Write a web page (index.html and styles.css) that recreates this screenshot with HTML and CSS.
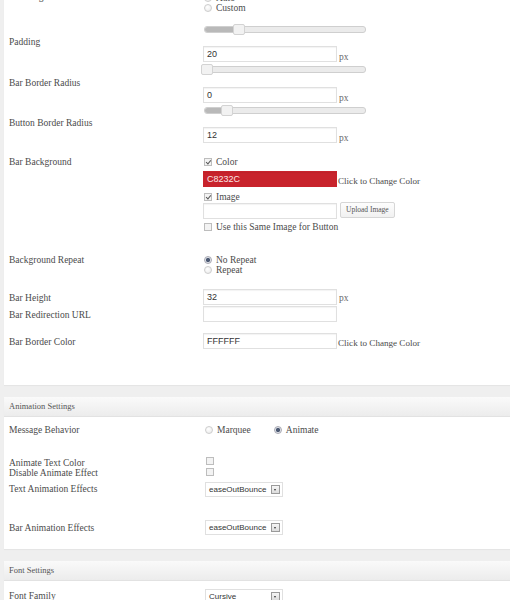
FILE: index.html
```html
<!DOCTYPE html>
<html>
<head>
<meta charset="utf-8">
<link rel="stylesheet" href="styles.css">
</head>
<body>
<div class="panel panel-first">
  <div class="row r1">
    <div class="label">Bar Height</div>
    <div class="ctrl">
      <div class="opt"><span class="radio"></span>Auto</div>
      <div class="opt"><span class="radio"></span>Custom</div>
      <div class="slider"><span class="fill" style="width:28px"></span><span class="thumb" style="left:28px"></span></div>
    </div>
  </div>
  <div class="row r2">
    <div class="label">Padding</div>
    <div class="ctrl">
      <div class="line"><span class="input">20</span><span class="unit">px</span></div>
      <div class="slider"><span class="thumb" style="left:-4px"></span></div>
    </div>
  </div>
  <div class="row r3">
    <div class="label">Bar Border Radius</div>
    <div class="ctrl">
      <div class="line"><span class="input">0</span><span class="unit">px</span></div>
      <div class="slider"><span class="fill" style="width:16px"></span><span class="thumb" style="left:16px"></span></div>
    </div>
  </div>
  <div class="row r4">
    <div class="label">Button Border Radius</div>
    <div class="ctrl">
      <div class="line"><span class="input">12</span><span class="unit">px</span></div>
    </div>
  </div>
  <div class="row r5">
    <div class="label">Bar Background</div>
    <div class="ctrl">
      <div class="opt opt-tall"><span class="check checked"></span>Color</div>
      <div class="line mt3"><span class="input input-red">C8232C</span><span class="note">Click to Change Color</span></div>
      <div class="opt opt-tall mt4"><span class="check checked"></span>Image</div>
      <div class="line"><span class="input"></span><span class="button">Upload Image</span></div>
      <div class="opt opt-tall mt2"><span class="check"></span>Use this Same Image for Button</div>
    </div>
  </div>
  <div class="row r6">
    <div class="label">Background Repeat</div>
    <div class="ctrl">
      <div class="opt"><span class="radio checked"></span>No Repeat</div>
      <div class="opt"><span class="radio"></span>Repeat</div>
    </div>
  </div>
  <div class="row r7">
    <div class="label">Bar Height</div>
    <div class="ctrl">
      <div class="line"><span class="input">32</span><span class="unit unit-low">px</span></div>
    </div>
  </div>
  <div class="row r8">
    <div class="label">Bar Redirection URL</div>
    <div class="ctrl">
      <div class="line"><span class="input"></span></div>
    </div>
  </div>
  <div class="row r9">
    <div class="label">Bar Border Color</div>
    <div class="ctrl">
      <div class="line"><span class="input">FFFFFF</span><span class="note">Click to Change Color</span></div>
    </div>
  </div>
</div>

<div class="panel panel-mid">
  <div class="header">Animation Settings</div>
  <div class="row a1">
    <div class="label">Message Behavior</div>
    <div class="ctrl">
      <div class="opts-inline">
        <div class="opt"><span class="radio"></span>Marquee</div>
        <div class="opt"><span class="radio checked"></span>Animate</div>
      </div>
    </div>
  </div>
  <div class="row a2">
    <div class="label label-short">Animate Text Color</div>
    <div class="ctrl"><span class="check"></span></div>
  </div>
  <div class="row a3">
    <div class="label label-short">Disable Animate Effect</div>
    <div class="ctrl"><span class="check"></span></div>
  </div>
  <div class="row a4">
    <div class="label">Text Animation Effects</div>
    <div class="ctrl">
      <div class="select"><span>easeOutBounce</span><span class="arrow"></span></div>
    </div>
  </div>
  <div class="row a5">
    <div class="label">Bar Animation Effects</div>
    <div class="ctrl">
      <div class="select"><span>easeOutBounce</span><span class="arrow"></span></div>
    </div>
  </div>
</div>

<div class="panel panel-last">
  <div class="header">Font Settings</div>
  <div class="row f1">
    <div class="label">Font Family</div>
    <div class="ctrl">
      <div class="select"><span>Cursive</span><span class="arrow"></span></div>
    </div>
  </div>
</div>
</body>
</html>
```

FILE: styles.css
```css
html, body {
  margin: 0;
  padding: 0;
}
body {
  background: #efefef;
  font-family: "Liberation Serif", "Times New Roman", serif;
  font-size: 9.5px;
  color: #4b4b4b;
  width: 510px;
  height: 600px;
  overflow: hidden;
}
.panel {
  background: #fff;
  margin-left: 4px;
  padding-left: 5px;
  box-shadow: 0 1px 1px rgba(0,0,0,0.04);
}
.panel-first {
  margin-top: -14px;
  padding-bottom: 36px;
}
.panel-mid {
  margin-top: 12px;
  padding-left: 0;
  height: 152px;
}
.panel-last {
  margin-top: 12px;
  padding-left: 0;
  height: 60px;
}
.panel-mid .row, .panel-last .row {
  padding-left: 5px;
}
.header {
  height: 19px;
  line-height: 19px;
  padding-left: 5px;
  font-size: 8.5px;
  color: #555;
  background: linear-gradient(#fafafa, #ececec);
  border-bottom: 1px solid #e2e2e2;
}
.row {
  display: grid;
  grid-template-columns: 194px 1fr;
  box-sizing: border-box;
}
.label {
  line-height: 12px;
  white-space: nowrap;
}
.label-short { line-height: 10px; }
.ctrl {
  display: flex;
  flex-direction: column;
  align-items: flex-start;
}
.opt {
  display: flex;
  align-items: center;
  line-height: 10px;
  height: 10px;
  white-space: nowrap;
  font-size: 9.5px;
}
.opt-tall { height: 12px; line-height: 12px; }
.mt2 { margin-top: 2px; }
.mt3 { margin-top: 3px; }
.mt4 { margin-top: 4px; }
.radio {
  width: 6px;
  height: 6px;
  border-radius: 50%;
  border: 1px solid #cdcdcd;
  background: radial-gradient(circle at 40% 35%, #fff, #e8e8e8);
  margin: 0 4px 0 1px;
  flex: none;
  position: relative;
}
.radio.checked {
  border-color: #a9a9b2;
  background: radial-gradient(circle, #4d5a73 0 1.8px, #dfe3ea 2.4px);
}
.check {
  width: 6px;
  height: 6px;
  border: 1px solid #bdbdbd;
  background: #f3f3f3;
  margin: 0 4px 0 1px;
  flex: none;
  position: relative;
}
.check.checked::after {
  content: "";
  position: absolute;
  left: 2px;
  top: 0px;
  width: 1.5px;
  height: 4px;
  border: solid #555;
  border-width: 0 1px 1px 0;
  transform: rotate(40deg);
}
.slider {
  position: relative;
  width: 160px;
  height: 5px;
  margin-left: 1px;
  border: 1px solid #cfcfcf;
  border-radius: 3px;
  background: #ebebeb;
}
.slider .fill {
  position: absolute;
  left: 0;
  top: 0;
  bottom: 0;
  background: #b9b9b9;
  border-radius: 3px 0 0 3px;
}
.slider .thumb {
  position: absolute;
  top: -3px;
  width: 10px;
  height: 9px;
  border: 1px solid #d3d3d3;
  border-radius: 2px;
  background: #f2f2f2;
}
.line {
  display: flex;
  align-items: center;
  height: 16px;
}
.input {
  box-sizing: border-box;
  width: 134px;
  height: 16px;
  border: 1px solid #e0e0e0;
  box-shadow: inset 0 1px 1px rgba(0,0,0,0.05);
  font-family: "Liberation Sans", Arial, sans-serif;
  font-size: 9px;
  line-height: 14px;
  padding-left: 3px;
  color: #333;
  background: #fff;
  flex: none;
}
.input-red {
  background: #c8232c;
  border-color: #c8232c;
  color: #f8e6e6;
}
.unit {
  margin-left: 2px;
  font-size: 9.5px;
  color: #666;
  align-self: flex-end;
  line-height: 12px;
  margin-bottom: -1px;
}
.unit-low { margin-bottom: 1px; }
.note {
  margin-left: 1px;
  font-size: 9.1px;
  color: #4b4b4b;
  align-self: flex-end;
  line-height: 12px;
  margin-bottom: 0;
}
.button {
  margin-left: 3px;
  height: 16px;
  box-sizing: border-box;
  padding: 0 5px;
  border: 1px solid #d6d6d6;
  border-radius: 2px;
  background: linear-gradient(#fdfdfd, #f1f1f1);
  font-size: 7.5px;
  line-height: 14px;
  color: #555;
  margin-top: -2px;
}
.opts-inline {
  display: flex;
  gap: 22px;
  margin-left: 1px;
}
.select {
  box-sizing: border-box;
  width: 78px;
  height: 15px;
  margin-left: 2px;
  border: 1px solid #e0e0e0;
  display: flex;
  align-items: center;
  justify-content: space-between;
  padding: 0 2px 0 3px;
  font-family: "Liberation Sans", Arial, sans-serif;
  font-size: 8px;
  color: #333;
  background: #fff;
}
.arrow {
  width: 7px;
  height: 7px;
  border: 1px solid #9a9a9a;
  background: linear-gradient(#f6f6f6, #dcdcdc);
  position: relative;
}
.arrow::after {
  content: "";
  position: absolute;
  left: 2px;
  top: 3px;
  border-left: 1.5px solid transparent;
  border-right: 1.5px solid transparent;
  border-top: 2px solid #333;
}

/* first panel rows */
.r1 { height: 50px; }
.r1 .label { padding-top: 5px; }
.r1 .ctrl { padding-top: 7px; }
.r1 .slider { margin-top: 13px; }

.r2 { height: 41px; }
.r2 .ctrl { padding-top: 10px; }
.r2 .slider { margin-top: 4px; }

.r3 { height: 40px; }
.r3 .ctrl { padding-top: 10px; }
.r3 .slider { margin-top: 4px; }

.r4 { height: 39px; }
.r4 .ctrl { padding-top: 10px; }

.r5 { height: 98px; }

.r6 { height: 29px; }
.r6 .ctrl { padding-top: 1px; }

.r7 { height: 22px; }
.r7 .label { padding-top: 9px; }
.r7 .ctrl { padding-top: 6px; }

.r8 { height: 17px; }
.r8 .label { padding-top: 4px; }
.r8 .ctrl { padding-top: 1px; }

.r9 { height: 27px; }
.r9 .label { padding-top: 14px; }
.r9 .ctrl { padding-top: 11px; }

/* animation rows */
.a1 { height: 38px; }
.a1 .label { padding-top: 7px; }
.a1 .ctrl { padding-top: 8px; }

.a2 { height: 13px; }
.a2 .label { padding-top: 3px; }
.a2 .ctrl { padding-top: 2px; }
.a2 .check, .a3 .check { margin-left: 3px; }

.a3 { height: 11px; }
.a3 .ctrl { padding-top: 0px; }

.a4 { height: 31px; }
.a4 .label { padding-top: 4px; }
.a4 .ctrl { padding-top: 3px; }

.a5 { height: 39px; }
.a5 .label { padding-top: 12px; }
.a5 .ctrl { padding-top: 10px; }

.f1 .label { padding-top: 9px; }
.f1 .ctrl { padding-top: 8px; }
```
